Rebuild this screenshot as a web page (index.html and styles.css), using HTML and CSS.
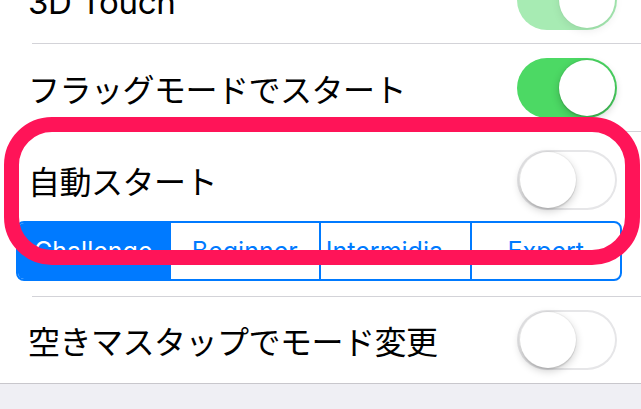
FILE: index.html
```html
<!DOCTYPE html>
<html lang="ja">
<head>
<meta charset="utf-8">
<title>Settings</title>
<link rel="stylesheet" href="styles.css">
</head>
<body>
<div class="screen">
  <div class="list">
    <div class="row">
      <span class="label latin">3D Touch</span>
      <span class="switch on dim"><span class="knob"></span></span>
    </div>
    <div class="sep"></div>
    <div class="row">
      <span class="label">フラッグモードでスタート</span>
      <span class="switch on"><span class="knob"></span></span>
    </div>
    <div class="sep"></div>
    <div class="cell-auto">
      <div class="auto-head">
        <span class="label">自動スタート</span>
        <span class="switch off"><span class="knob"></span></span>
      </div>
      <div class="segmented">
        <span class="seg active">Challenge</span>
        <span class="seg">Beginner</span>
        <span class="seg">Intermidia…</span>
        <span class="seg">Expert</span>
      </div>
    </div>
    <div class="sep"></div>
    <div class="row last">
      <span class="label">空きマスタップでモード変更</span>
      <span class="switch off"><span class="knob"></span></span>
    </div>
  </div>
  <div class="footer"></div>
  <div class="highlight"></div>
</div>
</body>
</html>
```

FILE: styles.css
```css
html, body {
  margin: 0;
  padding: 0;
  background: #ffffff;
}

.screen {
  position: relative;
  width: 641px;
  height: 409px;
  overflow: hidden;
  background: #ffffff;
  font-family: "Inter", "Noto Sans CJK JP", sans-serif;
  color: #000000;
}

.list {
  margin-top: -44px;
  display: flex;
  flex-direction: column;
}

.row {
  height: 87px;
  display: flex;
  align-items: center;
  justify-content: space-between;
  padding: 0 24px 0 28px;
  box-sizing: border-box;
}

.row.last {
  height: 86px;
}

.label {
  font-family: "Noto Sans CJK JP", sans-serif;
  font-size: 32px;
  letter-spacing: -0.5px;
  line-height: 1;
  white-space: nowrap;
}

.label.latin {
  font-family: "Inter", "Noto Sans CJK JP", sans-serif;
  font-size: 33px;
  letter-spacing: -0.3px;
  padding-top: 6px;
}

.sep {
  height: 1px;
  margin-left: 32px;
  background: #d3d3d8;
}

/* switches */
.switch {
  width: 100px;
  height: 60px;
  border-radius: 30px;
  box-sizing: border-box;
  padding: 2px;
  display: flex;
  align-items: center;
  flex-shrink: 0;
}

.switch .knob {
  width: 56px;
  height: 56px;
  border-radius: 50%;
  background: #ffffff;
  box-shadow: 0 3px 8px rgba(0, 0, 0, 0.2), 0 2px 1px rgba(0, 0, 0, 0.08), 0 0 0 1px rgba(0, 0, 0, 0.04);
}

.switch.on {
  background: #4cd964;
  justify-content: flex-end;
}

.switch.on.dim {
  background: #a7ebb3;
}

.switch.on.dim .knob {
  box-shadow: 0 3px 8px rgba(0, 0, 0, 0.08), 0 0 0 1px rgba(0, 0, 0, 0.02);
}

.switch.off {
  background: #ffffff;
  box-shadow: inset 0 0 0 2px #e6e6e8;
  justify-content: flex-start;
  padding-left: 3px;
}

/* auto start cell */
.cell-auto {
  height: 164px;
  box-sizing: border-box;
  padding: 17px 19px 15px 16px;
  display: flex;
  flex-direction: column;
  gap: 11px;
}

.auto-head {
  height: 61px;
  display: flex;
  align-items: center;
  justify-content: space-between;
  padding: 0 5px 0 12px;
}

.segmented {
  height: 60px;
  box-sizing: border-box;
  border: 2px solid #007aff;
  border-radius: 8px;
  overflow: hidden;
  display: grid;
  grid-template-columns: repeat(4, 1fr);
}

.seg {
  display: flex;
  align-items: center;
  justify-content: center;
  font-family: "Inter", sans-serif;
  font-size: 25px;
  color: #007aff;
  border-left: 2px solid #007aff;
  white-space: nowrap;
  overflow: hidden;
  padding: 0 3px;
  min-width: 0;
}

.seg:first-child {
  border-left: none;
}

.seg.active {
  background: #007aff;
  color: #ffffff;
}

.footer {
  height: 30px;
  border-top: 1px solid #c8c7cc;
  background: #efeff4;
}

/* annotation overlay */
.highlight {
  position: absolute;
  left: 4px;
  top: 117px;
  width: 636px;
  height: 148px;
  box-sizing: border-box;
  border: 15px solid #ff1458;
  border-radius: 48px;
  pointer-events: none;
}
```
